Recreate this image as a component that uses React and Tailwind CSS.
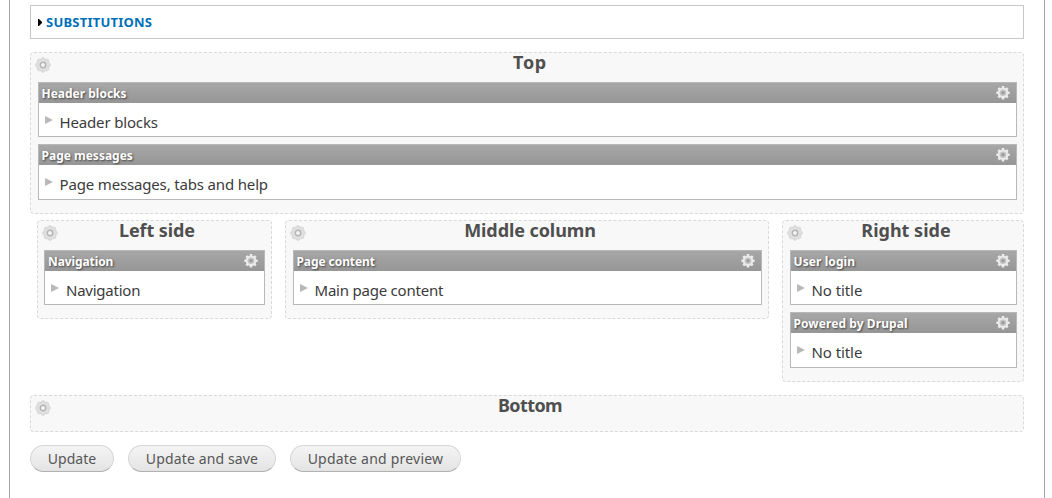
import React from "react";

function RegionGear() {
  return (
    <svg className="absolute left-1 top-1 h-4 w-4" viewBox="0 0 16 16">
      <g fill="#dedede" stroke="#d0d0d0" strokeWidth="0.5">
        {[0, 45, 90, 135, 180, 225, 270, 315].map((a) => (
          <path key={a} d="M5.200 4 6 1.500Q8-.6 10 1.500L10.800 4Z" transform={`rotate(${a} 8 8)`} />
        ))}
      </g>
      <circle cx="8" cy="8" r="5.600" fill="#e0e0e0" />
      <circle cx="8" cy="8" r="2.700" fill="#f4f4f4" stroke="#b4b4b4" strokeWidth="1.500" />
    </svg>
  );
}

function BlockGear() {
  return (
    <svg className="h-[14px] w-[14px]" viewBox="0 0 14 14">
      <g fill="#ebebeb">
        <circle cx="7" cy="6.700" r="5.300" />
        {[0, 45, 90, 135, 180, 225, 270, 315].map((a) => (
          <rect key={a} x="5.700" y="0" width="2.600" height="3" rx="0.500" transform={`rotate(${a} 7 6.700)`} />
        ))}
      </g>
      <circle cx="7" cy="6.700" r="3.300" fill="#c4c4c4" />
      <circle cx="7" cy="6.700" r="1.700" fill="#9c9c9c" />
    </svg>
  );
}

function Block({ title, titleClass = "", body, bodyClass = "", tall }) {
  return (
    <section className={`flex flex-col border border-[#b8b8b8] bg-white ${tall ? "h-[56px]" : "h-[55px]"}`}>
      <header className="flex h-5 shrink-0 items-start justify-between bg-linear-to-b from-[#a7a7a7] to-[#969696] pl-[2.500px] pr-[6px]">
        <h3 className={`whitespace-nowrap text-[12px] font-bold leading-[22px] text-white [text-shadow:1px_1px_2px_#444] ${titleClass}`}>{title}</h3>
        <div className="pt-[3px]">
          <BlockGear />
        </div>
      </header>
      <div className="flex pl-[6px]">
        <svg className="mt-[13px] h-[8px] w-[8px] shrink-0" viewBox="0 0 8 8">
          <path d="M0 0 8 4 0 8Z" fill="#b9b9b9" />
        </svg>
        <p className={`ml-[6.500px] mt-[9px] whitespace-nowrap text-[15px] leading-[20px] text-[#3b3b3b] ${bodyClass}`}>{body}</p>
      </div>
    </section>
  );
}

function Region({ title, titleClass = "", className, children }) {
  return (
    <section className={`relative rounded-[4px] border border-dashed border-[#d9d9d9] bg-[#f8f8f8] ${className}`}>
      <RegionGear />
      <h2 className={`h-[29px] whitespace-nowrap pl-[5px] text-center text-[18px] font-bold leading-[18px] text-[#4f4f4f] ${titleClass}`}>{title}</h2>
      {children && <div className="flex flex-col gap-[7px]">{children}</div>}
    </section>
  );
}

function Button({ children, className }) {
  return (
    <button className={`h-[27px] whitespace-nowrap rounded-full border border-[#d6d6d6] border-b-[#b0b0b0] bg-linear-to-b from-[#f4f4f4] to-[#e4e4e4] text-[14px] leading-[24px] text-[#565656] ${className}`}>
      {children}
    </button>
  );
}

export default function App() {
  return (
    <div className="h-[498px] w-[1052px] bg-white pl-[9px] font-['Noto_Sans',sans-serif]">
      <main className="h-full w-[1036px] border-x border-[#a3a3a3] px-5 pt-[5px]">
        <div className="flex h-[34px] w-[994px] items-center border border-[#c8c8c8] pl-[7px]">
          <svg className="h-[7px] w-[4px]" viewBox="0 0 4 7">
            <path d="M0 0H1L4 3V4L1 7H0Z" fill="#000" />
          </svg>
          <a className="ml-1 whitespace-nowrap text-[13px] font-bold leading-[20px] tracking-[0.230px] text-[#0071b8]">SUBSTITUTIONS</a>
        </div>
        <Region title="Top" titleClass="tracking-[0.700px]" className="mt-[13px] h-[162px] w-[994px] pl-[7px] pr-[6px]">
          <Block title="Header blocks" body="Header blocks" bodyClass="tracking-[-0.160px]" />
          <Block tall title="Page messages" body="Page messages, tabs and help" bodyClass="tracking-[-0.160px]" />
        </Region>
        <div className="mt-[6px] flex h-[175px] w-[994px] items-start pl-[7px]">
          <Region title="Left side" titleClass="tracking-[-0.080px]" className="h-[99px] w-[235px] px-[6px]">
            <Block title="Navigation" body="Navigation" titleClass="pl-[0.500px] tracking-[-0.100px]" bodyClass="pl-[0.500px] tracking-[-0.240px]" />
          </Region>
          <Region title="Middle column" titleClass="tracking-[-0.080px]" className="ml-[13px] h-[99px] w-[484px] pl-[7px] pr-[6px]">
            <Block title="Page content" body="Main page content" titleClass="tracking-[-0.080px]" bodyClass="tracking-[-0.220px]" />
          </Region>
          <Region title="Right side" className="ml-[13px] h-[162px] w-[242px] pl-[7px] pr-[6px]">
            <Block title="User login" body="No title" titleClass="tracking-[0.080px]" bodyClass="tracking-[-0.080px]" />
            <Block tall title="Powered by Drupal" body="No title" titleClass="tracking-[0.080px]" bodyClass="tracking-[-0.080px]" />
          </Region>
        </div>
        <Region title="Bottom" titleClass="tracking-[-0.600px]" className="h-[37px] w-[994px] pl-[7px] pr-[6px]" />
        <div className="mt-[13px] flex">
          <Button className="w-[84px]">Update</Button>
          <Button className="ml-[14px] w-[148px] tracking-[0.140px]">Update and save</Button>
          <Button className="ml-[14px] w-[171px] tracking-[0.220px]">Update and preview</Button>
        </div>
      </main>
    </div>
  );
}
